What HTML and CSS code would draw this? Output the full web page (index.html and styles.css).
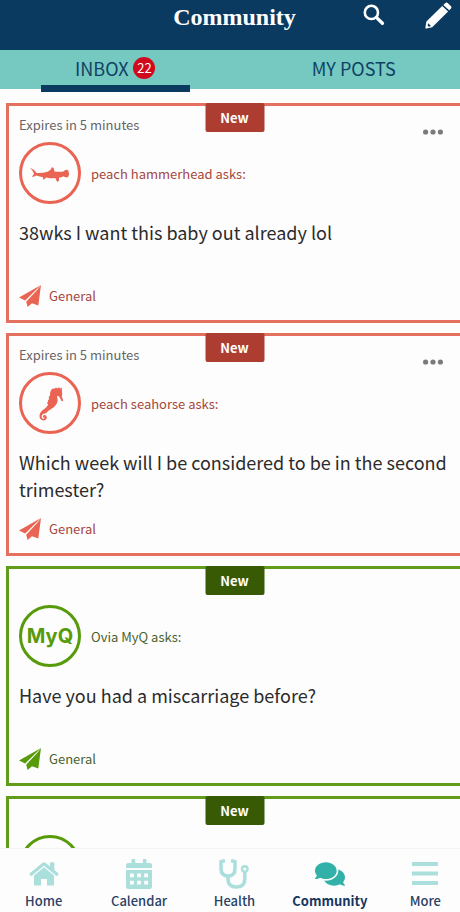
FILE: index.html
```html
<!DOCTYPE html>
<html lang="en">
<head>
  <meta charset="UTF-8">
  <meta name="viewport" content="width=device-width, initial-scale=1">
  <title>Community</title>
  <link rel="stylesheet" href="styles.css">
</head>
<body>
  <svg class="defs" aria-hidden="true">
    <symbol id="plane" viewBox="0 0 22 22">
      <path d="M0 12.6 22 0 6.2 15.6z"/>
      <path d="M22 0 19.3 20.4 13 18.2 8.6 22 7.2 16.700 18.600 4.600z"/>
    </symbol>
    <symbol id="dots" viewBox="0 0 20 6">
      <circle cx="2.6" cy="3" r="2.6"/>
      <circle cx="10" cy="3" r="2.6"/>
      <circle cx="17.4" cy="3" r="2.6"/>
    </symbol>
  </svg>

  <div class="app">
    <header class="topbar">
      <h1>Community</h1>
      <div class="actions">
        <button class="icon-btn" aria-label="Search">
          <svg class="line" width="22" height="22" viewBox="0 0 22 22">
            <circle cx="8.4" cy="8.4" r="6.6" stroke-width="2.6"/>
            <path d="M13.6 13.6 19.4 19.2" stroke-width="3.4" stroke-linecap="round"/>
          </svg>
        </button>
        <button class="icon-btn" aria-label="New post">
          <svg width="27" height="27" viewBox="0 0 27 27">
            <path d="M18.3 2.9 20.2 1.2Q21.4 0 22.7 1.1L26 4.2Q27 5.3 26 6.4L24.2 8.2z"/>
            <path fill-rule="evenodd" d="M17.2 4 23.1 9.4 7.2 25.2 1.4 26.6Q.2 26.8.4 25.5L1.4 19.6zM3.2 21.2 2.6 23.6 3.8 24.7 6 24.1z"/>
          </svg>
        </button>
      </div>
    </header>

    <nav class="tabs">
      <a class="tab active" href="#inbox">INBOX <span class="count">22</span></a>
      <a class="tab" href="#posts">MY POSTS</a>
    </nav>

    <main class="feed">
      <article class="card peach">
        <span class="badge">New</span>
        <div class="card-top">
          <span>Expires in 5 minutes</span>
          <button class="more" aria-label="Options"><svg><use href="#dots"/></svg></button>
        </div>
        <div class="author">
          <span class="avatar">
            <svg width="40" height="20" viewBox="0 -4 40 20">
              <path d="M0 .8Q4.500 2.600 6.600 5.900Q12 6.300 17.500 4.800Q20.500 3.800 22 .2Q23.800 0 24.500 4.400Q29 5.200 33.500 4.600Q34.300 2.800 37 2.800Q39.200 3.200 38.500 5.300Q40 6.800 38.700 8.200Q39 10.200 36.800 10.400Q34.500 10.300 33.500 9.200Q32 10.400 29 10.700Q29.800 13.200 27.800 15.300Q25.800 13.600 25.300 11.100L22 11.200Q19 11.500 16.200 10.500Q14.800 12.600 12.800 12.800L13.200 10.200Q9.500 9.600 6.400 8.600Q4.500 9.900 2.200 10Q2.600 8 4.200 6.900Q2.800 3.800 0 .8z"/>
            </svg>
          </span>
          <span>peach hammerhead asks:</span>
        </div>
        <p class="question">38wks I want this baby out already lol</p>
        <div class="topic"><svg><use href="#plane"/></svg>General</div>
      </article>

      <article class="card peach">
        <span class="badge">New</span>
        <div class="card-top">
          <span>Expires in 5 minutes</span>
          <button class="more" aria-label="Options"><svg><use href="#dots"/></svg></button>
        </div>
        <div class="author">
          <span class="avatar">
            <svg width="28" height="36" viewBox="-3 -2 28 36">
              <path d="M12.600 2.400Q13.600 1.200 15.800 1.500L17 .4 18.200 1.400 20 .3 21.200 1.500 23 .5Q22.500 2.300 23 4Q23.600 7 22.800 9.500L24.200 13.500 22.800 14.600 20.200 9.400Q18.600 8.600 17.800 9.500Q19.600 13.200 17.600 17Q15.400 20.600 11.800 22.200Q8.800 23.600 7 26.200"/>
              <path d="M12.600 2.400Q10.500 4.800 11.200 8L9.600 10.500 10.400 12Q8.500 12.800 9 14.600L7.800 16.300 9.300 17.300Q8.800 19.600 6 21.500Q.8 24.600.5 28.500Q.5 33.300 4.400 33.400Q7.900 33.200 7.800 30.200Q7.300 27.700 5 28.100Q3.400 28.800 4.200 30.400Q4.800 31 5.500 30.300Q5.600 31.900 4.200 31.900Q2.300 31.500 2.700 29Q3.400 26.300 7 26.200L17.800 9.500 20 5z"/>
            </svg>
          </span>
          <span>peach seahorse asks:</span>
        </div>
        <p class="question">Which week will I be considered to be in the second trimester?</p>
        <div class="topic"><svg><use href="#plane"/></svg>General</div>
      </article>

      <article class="card green">
        <span class="badge">New</span>
        <div class="card-top"></div>
        <div class="author">
          <span class="avatar">MyQ</span>
          <span>Ovia MyQ asks:</span>
        </div>
        <p class="question">Have you had a miscarriage before?</p>
        <div class="topic"><svg><use href="#plane"/></svg>General</div>
      </article>

      <article class="card green">
        <span class="badge">New</span>
        <div class="card-top"></div>
        <div class="author">
          <span class="avatar"></span>
        </div>
      </article>
    </main>

    <nav class="bottom-nav">
      <a href="#home">
        <svg width="30" height="30" viewBox="0 0 30 30">
          <path d="M15 8.200 25 16.400V25.800Q25 26.600 24.200 26.600H18V20H12V26.600H5.800Q5 26.600 5 25.800V16.400z"/>
          <path d="M13.600 3.700Q15 2.600 16.400 3.700L21 7.500V4Q21 3.300 21.700 3.300H24.700Q25.400 3.300 25.400 4V11.100L29.300 14.300Q29.800 14.800 29.400 15.400L28.300 16.700Q27.800 17.200 27.200 16.700L15 6.700 2.800 16.700Q2.200 17.200 1.700 16.700L.6 15.400Q.2 14.800.7 14.300z"/>
        </svg>
        Home
      </a>
      <a href="#calendar">
        <svg width="30" height="30" viewBox="0 0 30 30">
          <path d="M2 9V6.200Q2 4 4.200 4H7.500V1Q7.500 0 8.500 0H10.200Q11.200 0 11.200 1V4H18.800V1Q18.800 0 19.800 0H21.500Q22.500 0 22.500 1V4H25.800Q28 4 28 6.200V9z"/>
          <path fill-rule="evenodd" d="M2 11H28V27.800Q28 30 25.800 30H4.200Q2 30 2 27.800zM6 14.500V18.300H9.800V14.500zM13.100 14.500V18.300H16.900V14.500zM20.200 14.500V18.300H24V14.500zM6 21.800V25.600H9.800V21.800zM13.100 21.800V25.600H16.900V21.800zM20.200 21.800V25.600H24V21.800z"/>
        </svg>
        Calendar
      </a>
      <a href="#health">
        <svg class="line" width="30" height="30" viewBox="0 0 30 30">
          <path d="M6 1.800 2 2.600V9.500Q2 17 9 17T16 9.500V2.600L12 1.800" stroke-width="3.600" stroke-linejoin="round"/>
          <path d="M9 17V20Q9 28 17.400 28T25.800 20V13" stroke-width="3.600"/>
          <circle cx="25.800" cy="10" r="2.800" stroke-width="2.400"/>
        </svg>
        Health
      </a>
      <a class="current" href="#community">
        <svg width="30" height="30" viewBox="0 0 576 512">
          <path d="M416 192c0-88.400-93.100-160-208-160S0 103.600 0 192c0 34.300 14.100 65.900 38 92-13.400 30.200-35.500 54.200-35.800 54.500-2.200 2.300-2.800 5.700-1.500 8.700S4.800 352 8 352c36.600 0 66.900-12.300 88.700-25 32.200 15.700 70.300 25 111.300 25 114.900 0 208-71.600 208-160zm122 220c23.900-26 38-57.700 38-92 0-66.900-53.500-124.200-129.300-148.100.9 6.600 1.300 13.300 1.300 20.100 0 105.900-107.700 192-240 192-10.800 0-21.300-.8-31.700-1.900C207.800 439.600 281.800 480 368 480c41 0 79.100-9.200 111.300-25 21.800 12.700 52.100 25 88.700 25 3.200 0 6.100-1.900 7.300-4.800 1.300-2.900.7-6.300-1.500-8.700-.3-.3-22.400-24.200-35.800-54.500z"/>
        </svg>
        Community
      </a>
      <a href="#more">
        <svg width="30" height="30" viewBox="0 0 30 30">
          <path d="M2 3H28V7H2zM2 12.500H28V16.500H2zM2 22H28V26H2z"/>
        </svg>
        More
      </a>
    </nav>
  </div>
</body>
</html>
```
FILE: styles.css
```css
* {
  box-sizing: border-box;
}

body {
  margin: 0;
  overflow: hidden;
  background-color: #fefdfe;
  color: #2b2b2b;
  font-family: "Noto Sans CJK SC", "Open Sans", sans-serif;
  font-size: 13px;
}

a {
  color: inherit;
  text-decoration: none;
}

button {
  border: none;
  background: none;
  padding: 0;
  color: inherit;
  cursor: pointer;
}

svg {
  display: block;
  fill: currentColor;
}

.line {
  fill: none;
  stroke: currentColor;
}

.defs {
  position: absolute;
  width: 0;
  height: 0;
}

/* slightly wider than the window on both sides */
.app {
  display: flex;
  flex-direction: column;
  height: 100vh;
  margin: 0 -13px 0 -4px;
}

.topbar {
  display: grid;
  grid-template-columns: 1fr auto 1fr;
  flex: none;
  height: 50px;
  padding: 0 21px;
  background-color: #0b3a61;
  color: #fff;
}

.topbar h1 {
  grid-column: 2;
  margin: 0;
  font-family: "Liberation Serif", serif;
  font-size: 24px;
  line-height: 34px;
}

.actions {
  display: flex;
  align-items: center;
  justify-content: flex-end;
  gap: 40px;
  height: 30px;
}

.tabs {
  display: grid;
  grid-template-columns: 1fr 1fr;
  flex: none;
  height: 39px;
  background-color: #75c9c1;
  color: #0f4263;
  font-size: 18px;
}

.tab {
  position: relative;
  display: flex;
  align-items: center;
  justify-content: center;
  gap: 5px;
  padding-bottom: 3px;
}

.tab.active::after {
  content: "";
  position: absolute;
  left: 45px;
  right: 45px;
  bottom: -3px;
  height: 7px;
  background-color: #0b3a61;
}

.count {
  width: 22px;
  height: 22px;
  border-radius: 50%;
  background-color: #d00a1c;
  color: #fff;
  font-size: 13px;
  line-height: 22px;
  text-align: center;
}

.feed {
  flex: 1;
  min-height: 0;
  overflow-y: auto;
  scrollbar-width: none;
  display: flex;
  flex-direction: column;
  gap: 10px;
  padding: 14px 10px 0;
}

.card {
  position: relative;
  flex: none;
  padding: 9px 10px 13px;
  border: 3px solid;
}

.peach {
  border-color: #e4705f;
  color: #a5473b;
}

.green {
  border-color: #629c1b;
  color: #48622c;
}

.badge {
  position: absolute;
  top: -3px;
  left: 50%;
  transform: translateX(-50%);
  width: 59px;
  border-radius: 2px;
  color: #fff;
  font-weight: bold;
  line-height: 29px;
  text-align: center;
}

.peach .badge {
  background-color: #ad3d31;
}

.green .badge {
  background-color: #385a05;
}

.card-top {
  display: flex;
  align-items: flex-end;
  justify-content: space-between;
  height: 20px;
  padding-right: 7px;
  color: #666;
  line-height: 20px;
}

.more {
  color: #7b7b7b;
}

.more svg {
  width: 20px;
  height: 6px;
}

.author {
  display: flex;
  align-items: center;
  gap: 10px;
  margin-top: 7px;
}

.avatar {
  display: flex;
  align-items: center;
  justify-content: center;
  width: 62px;
  height: 62px;
  border: 3px solid;
  border-radius: 50%;
  font-family: Inter, sans-serif;
  font-size: 20px;
  font-weight: bold;
}

.peach .avatar,
.peach .topic svg {
  color: #ea6453;
}

.green .avatar,
.green .topic svg {
  color: #579b0b;
}

.question {
  min-height: 51px;
  margin: 15px 0;
  color: #2b2b2b;
  font-size: 18px;
  line-height: 27px;
}

.topic {
  display: flex;
  align-items: center;
  gap: 8px;
  line-height: 22px;
}

.topic svg {
  width: 22px;
  height: 22px;
}

.bottom-nav {
  z-index: 1;
  display: grid;
  grid-template-columns: repeat(5, 1fr);
  flex: none;
  height: 64px;
  padding-top: 10px;
  border-top: 1px solid #f6f2f4;
  background-color: #fefdfe;
  color: #2a4266;
  font-weight: 500;
}

.bottom-nav a {
  display: flex;
  flex-direction: column;
  align-items: center;
  gap: 2px;
  line-height: 20px;
}

.bottom-nav svg {
  color: #abdfdc;
}

.bottom-nav .current {
  color: #16365e;
  font-weight: bold;
}

.bottom-nav .current svg {
  color: #32b1a8;
}
```
